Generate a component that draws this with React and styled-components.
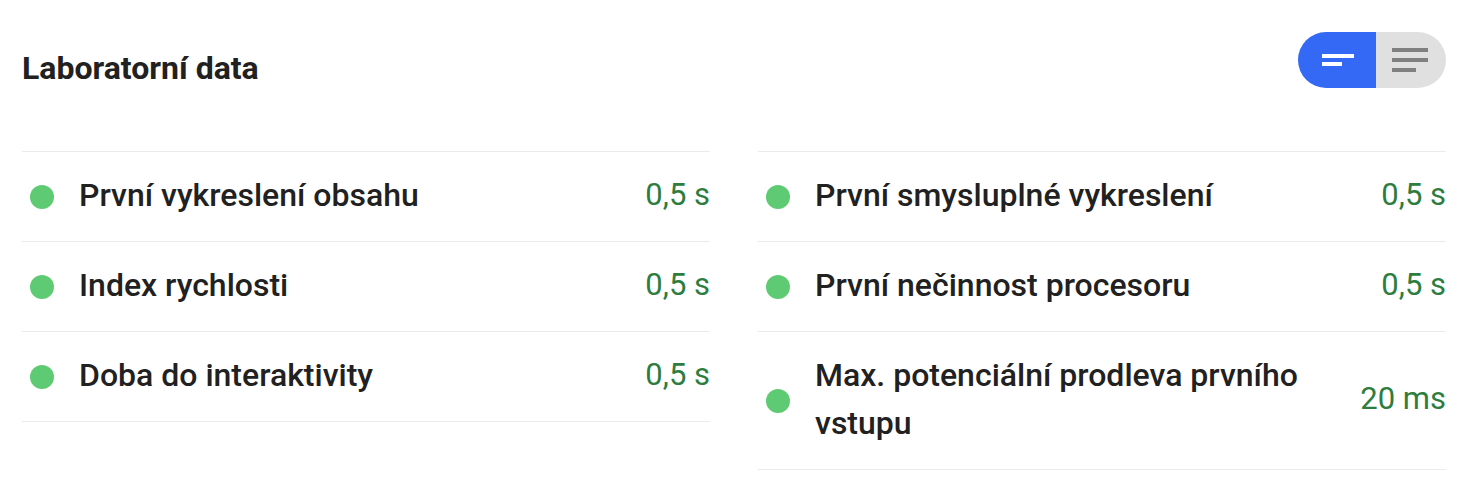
import React from "react";
import styled, { createGlobalStyle } from "styled-components";

const Global = createGlobalStyle`
  html, body { margin: 0; padding: 0; background: #fff; }
  body { font-family: Roboto, "Noto Sans", "Liberation Sans", sans-serif; color: #212121; }
`;

const Page = styled.div`
  padding: 32px 38px 0 22px;
`;

const Header = styled.div`
  display: flex;
  justify-content: space-between;
  align-items: flex-start;
  height: 119px;
`;

const Title = styled.h2`
  margin: 12px 0 0;
  font-size: 32px;
  line-height: 48px;
  font-weight: 700;
  color: #212121;
`;

const Toggle = styled.div`
  display: flex;
  width: 148px;
  height: 56px;
  border-radius: 28px;
  overflow: hidden;
`;

const ToggleHalf = styled.button`
  flex: 1;
  border: 0;
  margin: 0;
  padding: 0 0 0 ${(p) => p.$pad}px;
  display: flex;
  align-items: center;
  background: ${(p) => (p.$active ? "#3469f5" : "#e0e0e0")};
  cursor: pointer;
`;

const Grid = styled.div`
  display: grid;
  grid-template-columns: 1fr 1fr;
  column-gap: 48px;
  align-items: start;
`;

const Column = styled.div`
  display: flex;
  flex-direction: column;
  border-bottom: 1px solid #ebebeb;
`;

const Row = styled.div`
  display: flex;
  align-items: center;
  border-top: 1px solid #ebebeb;
  padding: 18.5px 0 22.5px 8px;
`;

const Dot = styled.span`
  flex: none;
  width: 24px;
  height: 24px;
  border-radius: 50%;
  background: #5ecb74;
  margin: 4px 25px 0 0;
`;

const Label = styled.span`
  flex: 1;
  font-size: 32px;
  font-weight: 500;
  line-height: 48px;
  color: #212121;
`;

const Value = styled.span`
  flex: none;
  margin-left: 20px;
  font-size: 31px;
  line-height: 48px;
  color: #2e7d3e;
`;

const left = [
  ["První vykreslení obsahu", "0,5 s"],
  ["Index rychlosti", "0,5 s"],
  ["Doba do interaktivity", "0,5 s"],
];
const right = [
  ["První smysluplné vykreslení", "0,5 s"],
  ["První nečinnost procesoru", "0,5 s"],
  ["Max. potenciální prodleva prvního vstupu", "20 ms"],
];

const MetricColumn = ({ items }) => (
  <Column>
    {items.map(([l, v]) => (
      <Row key={l}>
        <Dot />
        <Label>{l}</Label>
        <Value>{v}</Value>
      </Row>
    ))}
  </Column>
);

export default function App() {
  return (
    <>
      <Global />
      <Page>
        <Header>
          <Title>Laboratorní data</Title>
          <Toggle>
            <ToggleHalf $active $pad={24} aria-label="compact">
              <svg width="32" height="12" viewBox="0 0 32 12">
                <rect x="0" y="0" width="32" height="4" fill="#fff" />
                <rect x="0" y="8" width="20" height="4" fill="#fff" />
              </svg>
            </ToggleHalf>
            <ToggleHalf $pad={16} aria-label="expanded">
              <svg width="36" height="24" viewBox="0 0 36 24">
                <rect x="0" y="0" width="36" height="4" fill="#808080" />
                <rect x="0" y="10" width="36" height="4" fill="#808080" />
                <rect x="0" y="20" width="24" height="4" fill="#808080" />
              </svg>
            </ToggleHalf>
          </Toggle>
        </Header>
        <Grid>
          <MetricColumn items={left} />
          <MetricColumn items={right} />
        </Grid>
      </Page>
    </>
  );
}
